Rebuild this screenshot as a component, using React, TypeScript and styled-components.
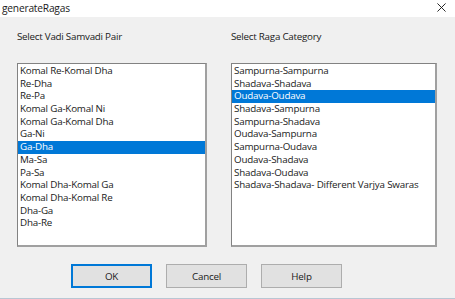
import React from "react";
import styled, { createGlobalStyle } from "styled-components";

const GlobalStyle = createGlobalStyle`
  html, body {
    margin: 0;
    padding: 0;
    background: #f0f0f0;
  }
  * {
    box-sizing: border-box;
  }
`;

const vadiPairs = [
  "Komal Re-Komal Dha",
  "Re-Dha",
  "Re-Pa",
  "Komal Ga-Komal Ni",
  "Komal Ga-Komal Dha",
  "Ga-Ni",
  "Ga-Dha",
  "Ma-Sa",
  "Pa-Sa",
  "Komal Dha-Komal Ga",
  "Komal Dha-Komal Re",
  "Dha-Ga",
  "Dha-Re",
];

const ragaCategories = [
  "Sampurna-Sampurna",
  "Shadava-Shadava",
  "Oudava-Oudava",
  "Shadava-Sampurna",
  "Sampurna-Shadava",
  "Oudava-Sampurna",
  "Sampurna-Oudava",
  "Oudava-Shadava",
  "Shadava-Oudava",
  "Shadava-Shadava- Different Varjya Swaras",
];

const Window = styled.div`
  width: 455px;
  height: 299px;
  display: flex;
  flex-direction: column;
  background: #f0f0f0;
  font-family: "Open Sans", "Noto Sans", sans-serif;
  color: #000;
  border-bottom: 1px solid #b9c6d3;
  overflow: hidden;
`;

const TitleBar = styled.div`
  height: 17px;
  flex: none;
  background: #fff;
  display: flex;
  align-items: center;
  justify-content: space-between;
  padding: 0 9px 0 2px;
`;

const Title = styled.span`
  font-size: 10.2px;
  letter-spacing: -0.2px;
  line-height: 17px;
  color: #1a1a1a;
`;

const CloseIcon = styled.svg`
  width: 9px;
  height: 9px;
  margin-top: -2px;
`;

const Body = styled.div`
  flex: 1;
  display: flex;
  flex-direction: column;
  padding: 13px 18px 0 17px;
`;

const Columns = styled.div`
  display: grid;
  grid-template-columns: 190px 206px;
  column-gap: 24px;
`;

const Group = styled.div`
  display: flex;
  flex-direction: column;
`;

const Label = styled.div`
  font-size: 9.8px;
  letter-spacing: -0.25px;
  line-height: 14px;
  height: 33px;
  color: #1a1a1a;
`;

const ListBox = styled.div`
  height: 184px;
  background: #fff;
  border-top: 1px solid #828282;
  border-left: 1px solid #828282;
  border-right: 2px solid #a0a0a0;
  border-bottom: 2px solid #a0a0a0;
  padding-top: 1px;
`;

const Item = styled.div<{ $selected?: boolean }>`
  height: 12.7px;
  line-height: 12.7px;
  font-size: 9.8px;
  padding-left: 2px;
  white-space: nowrap;
  letter-spacing: -0.2px;
  background: ${(p) => (p.$selected ? "#0078d7" : "transparent")};
  color: ${(p) => (p.$selected ? "#fff" : "#1a1a1a")};
`;

const ButtonRow = styled.div`
  display: flex;
  gap: 14px;
  margin-top: 17px;
  padding-left: 54px;
`;

const Button = styled.button<{ $default?: boolean }>`
  width: 81px;
  height: 24px;
  background: #e1e1e1;
  border: ${(p) => (p.$default ? "2px solid #0078d7" : "1px solid #adadad")};
  font-family: inherit;
  font-size: 9.8px;
  letter-spacing: -0.2px;
  color: #1a1a1a;
  padding: 0;
`;

export default function App() {
  return (
    <>
      <GlobalStyle />
      <Window>
        <TitleBar>
          <Title>generateRagas</Title>
          <CloseIcon viewBox="0 0 10 10">
            <path d="M0.5 0.5 L9.5 9.5 M9.5 0.5 L0.5 9.5" stroke="#111" strokeWidth="1" />
          </CloseIcon>
        </TitleBar>
        <Body>
          <Columns>
            <Group>
              <Label>Select Vadi Samvadi Pair</Label>
              <ListBox>
                {vadiPairs.map((v) => (
                  <Item key={v} $selected={v === "Ga-Dha"}>
                    {v}
                  </Item>
                ))}
              </ListBox>
            </Group>
            <Group>
              <Label>Select Raga Category</Label>
              <ListBox>
                {ragaCategories.map((c) => (
                  <Item key={c} $selected={c === "Oudava-Oudava"}>
                    {c}
                  </Item>
                ))}
              </ListBox>
            </Group>
          </Columns>
          <ButtonRow>
            <Button $default>OK</Button>
            <Button>Cancel</Button>
            <Button>Help</Button>
          </ButtonRow>
        </Body>
      </Window>
    </>
  );
}
